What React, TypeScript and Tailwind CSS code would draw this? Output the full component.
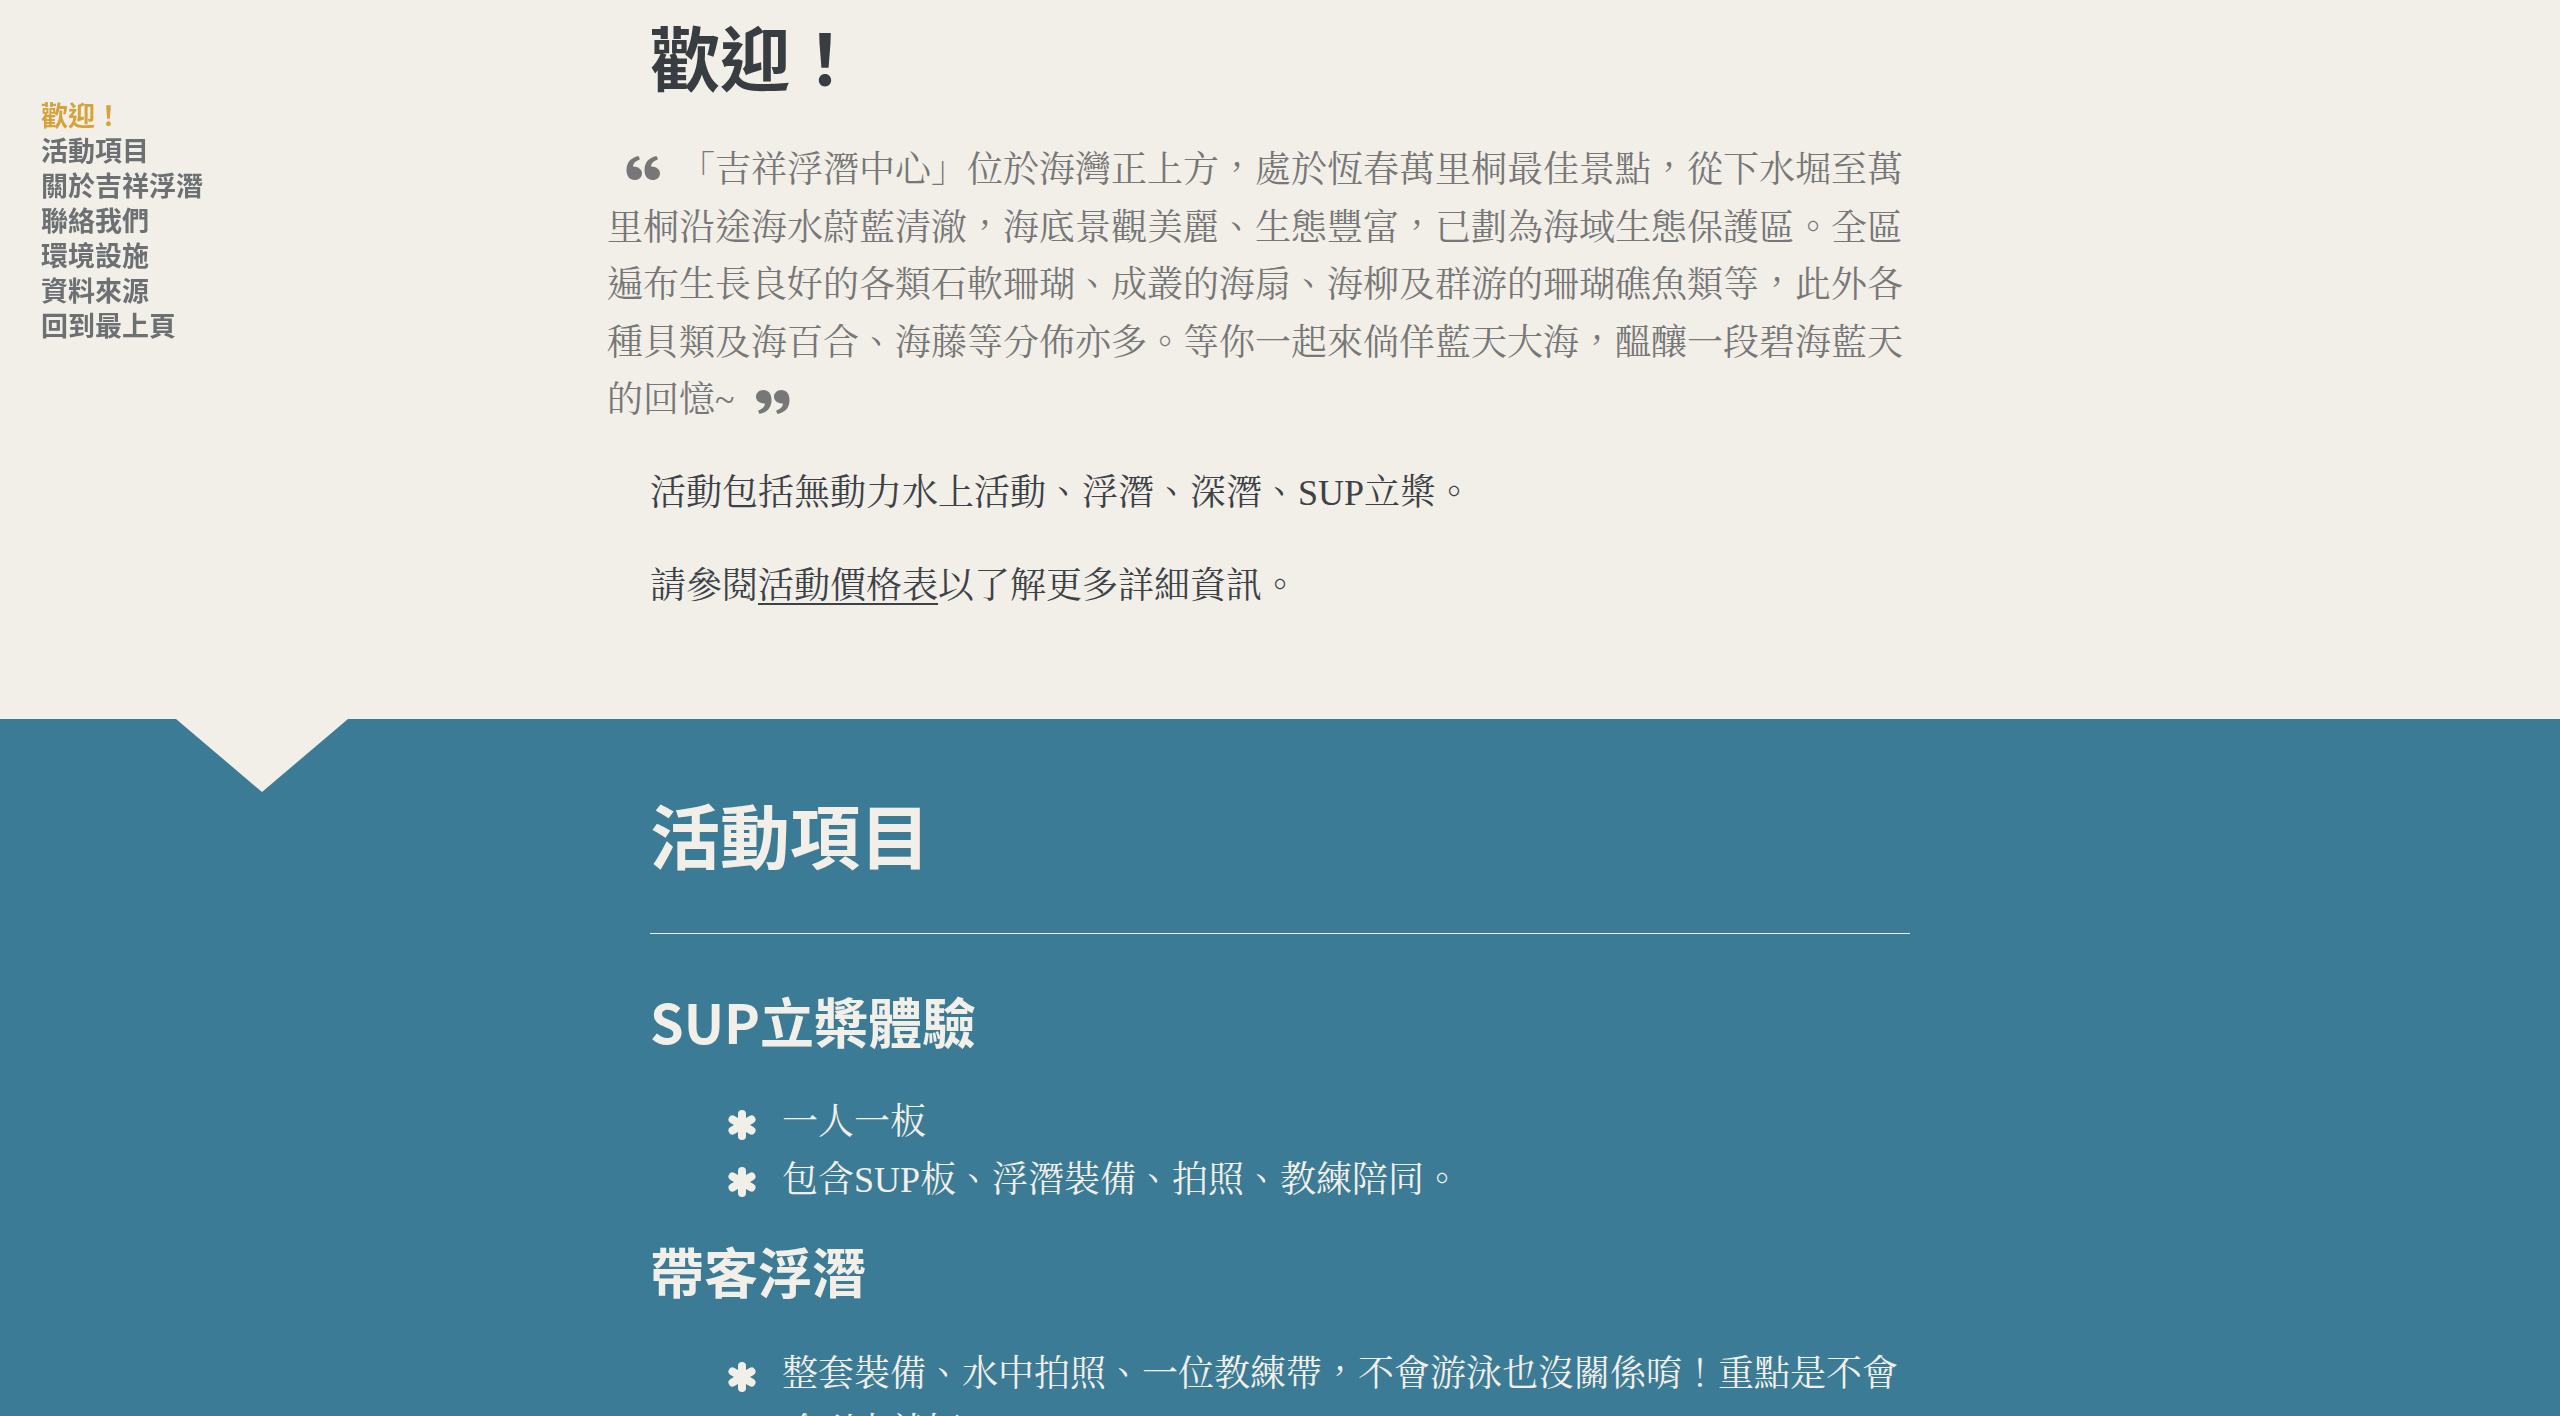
const navItems = ["歡迎！", "活動項目", "關於吉祥浮潛", "聯絡我們", "環境設施", "資料來源", "回到最上頁"];

const QuoteMark = ({ close }: { close?: boolean }) => (
  <svg
    viewBox="0 0 34 24"
    className={close ? "inline-block h-[24px] w-[34px] rotate-180" : "inline-block h-[24px] w-[34px]"}
    fill="currentColor"
  >
    <path d="M0.5 14C0.5 6.5 4.5 1.8 12.5 0L14 3.2C9.5 4.8 7.2 7.4 7 10.4C12.2 10.4 16 13.2 16 17.2C16 21.2 12.8 24 8.6 24C3.8 24 0.5 20.5 0.5 14Z" />
    <path d="M18.5 14C18.5 6.5 22.5 1.8 30.5 0L32 3.2C27.5 4.8 25.2 7.4 25 10.4C30.2 10.4 34 13.2 34 17.2C34 21.2 30.8 24 26.6 24C21.8 24 18.5 20.5 18.5 14Z" />
  </svg>
);

// heavy six-armed asterisk used as list bullet
const Star = () => (
  <svg viewBox="0 0 28 32" className="h-[32px] w-[28px]" stroke="currentColor" strokeWidth="8" strokeLinecap="round">
    <line x1="14" y1="5" x2="14" y2="27" />
    <line x1="4.5" y1="10.5" x2="23.5" y2="21.5" />
    <line x1="23.5" y1="10.5" x2="4.5" y2="21.5" />
  </svg>
);

const Bullet = ({ children }: { children: React.ReactNode }) => (
  <li className="flex items-start">
    <span className="flex h-[57.6px] w-[28px] shrink-0 items-center justify-center pt-[4px]">
      <Star />
    </span>
    <span className="ml-[26px]">{children}</span>
  </li>
);

const App = () => {
  return (
    <div className="relative h-screen overflow-hidden bg-[#f2efe9] font-['Liberation_Serif','Noto_Serif_CJK_TC','Noto_Sans_CJK_TC',serif]">
      <nav className="fixed left-[41px] top-[97px] z-10 flex flex-col font-['Noto_Sans_CJK_TC',sans-serif] text-[27px] font-bold leading-[35px] text-[#6d7072]">
        {navItems.map((item, i) => (
          <a key={item} href="#" className={i === 0 ? "text-[#d6a23c]" : ""}>
            {item}
          </a>
        ))}
      </nav>

      <section className="pt-[14px] pb-[104px]">
        <div className="mx-auto w-[1260px]">
          <h2 className="font-['Noto_Sans_CJK_TC',sans-serif] text-[70px] font-bold leading-[1.2] text-[#383d42]">
            歡迎！
          </h2>
          <blockquote className="-ml-[43px] mt-[44px] w-[1296px] text-justify text-[36px] leading-[57.6px] text-[#777777]">
            <span className="inline-flex w-[72px] items-center justify-center align-[2px]">
              <QuoteMark />
            </span>
            「吉祥浮潛中心」位於海灣正上方，處於恆春萬里桐最佳景點，從下水堀至萬里桐沿途海水蔚藍清澈，海底景觀美麗、生態豐富，已劃為海域生態保護區。全區遍布生長良好的各類石軟珊瑚、成叢的海扇、海柳及群游的珊瑚礁魚類等，此外各種貝類及海百合、海藤等分佈亦多。等你一起來倘佯藍天大海，醞釀一段碧海藍天的回憶~
            <span className="ml-[22px] inline-flex items-center align-[-2px]">
              <QuoteMark close />
            </span>
          </blockquote>
          <p className="mt-[35px] text-[36px] leading-[57.6px] text-[#3d4247]">
            活動包括無動力水上活動、浮潛、深潛、SUP立槳。
          </p>
          <p className="mt-[35px] text-[36px] leading-[57.6px] text-[#3d4247]">
            請參閱
            <a href="#" className="underline decoration-[2px] underline-offset-[5px]">
              活動價格表
            </a>
            以了解更多詳細資訊。
          </p>
        </div>
      </section>

      <section className="relative bg-[#3b7b95] pt-[73px] pb-[120px] text-[#f2efe9]">
        <div className="absolute left-[176px] top-0 h-0 w-0 border-x-[86px] border-t-[73px] border-x-transparent border-t-[#f2efe9]" />
        <div className="mx-auto w-[1260px]">
          <h2 className="font-['Noto_Sans_CJK_TC',sans-serif] text-[70px] font-bold leading-[1.2]">活動項目</h2>
          <hr className="mt-[57px] border-t border-[#f2efe9]" />

          <h3 className="mt-[55px] font-['Noto_Sans_CJK_TC',sans-serif] text-[54px] font-bold leading-[1.2]">
            SUP立槳體驗
          </h3>
          <ul className="mt-[40px] mb-[30px] pl-[78px] text-[36px] leading-[57.6px]">
            <Bullet>一人一板</Bullet>
            <Bullet>包含SUP板、浮潛裝備、拍照、教練陪同。</Bullet>
          </ul>

          <h3 className="font-['Noto_Sans_CJK_TC',sans-serif] text-[54px] font-bold leading-[1.2]">帶客浮潛</h3>
          <ul className="mt-[42px] mb-[32px] pl-[78px] text-[36px] leading-[57.6px]">
            <Bullet>整套裝備、水中拍照、一位教練帶，不會游泳也沒關係唷！重點是不會嗆到水就好。</Bullet>
            <Bullet>適合親子同遊，安全又好玩。</Bullet>
          </ul>
        </div>
      </section>
    </div>
  );
};

export default App;
